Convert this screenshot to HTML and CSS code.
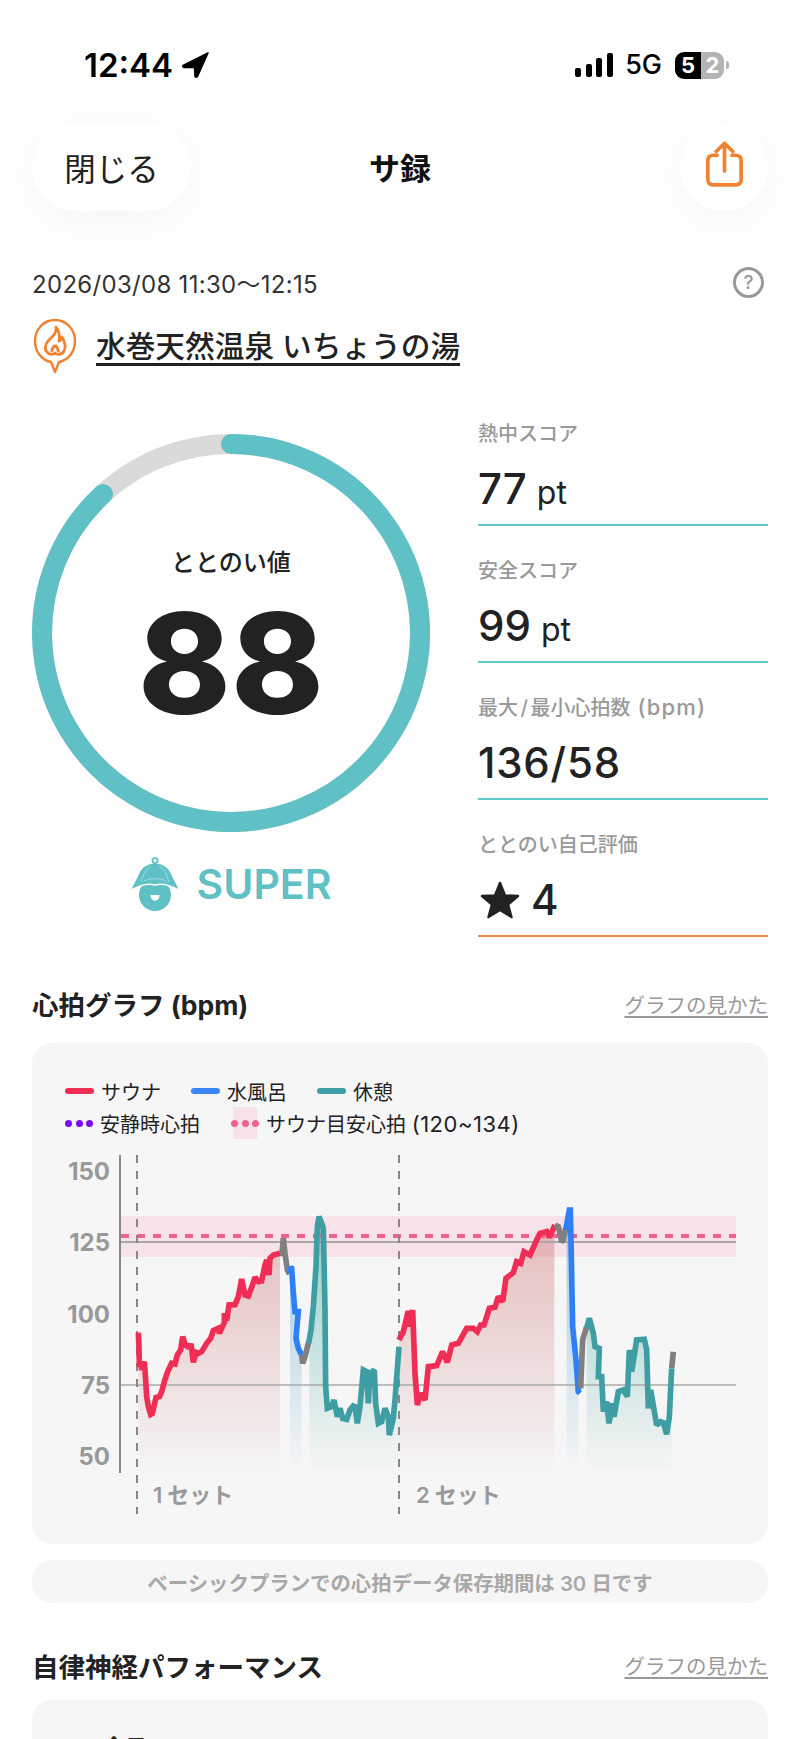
FILE: index.html
```html
<!DOCTYPE html>
<html lang="ja">
<head>
<meta charset="utf-8">
<title>サ録</title>
<link rel="stylesheet" href="styles.css">
</head>
<body>
<div class="page">
  <div class="status">
    <div class="status-left">
      <span class="time">12:44</span>
      <svg class="loc" viewBox="0 0 27 26"><path d="M26 1 L1 13.5 Q0 15 2 15.5 L12.5 15.5 L13 24.5 Q14 26 15.5 24.5 Z" fill="#000" stroke="#000" stroke-width="1.5" stroke-linejoin="round"/></svg>
    </div>
    <div class="status-right">
      <svg class="signal" viewBox="0 0 38 24"><rect x="0" y="15" width="6" height="9" rx="2"/><rect x="11" y="11" width="6" height="13" rx="2"/><rect x="21" y="5" width="6" height="19" rx="2"/><rect x="32" y="0" width="6" height="24" rx="2"/></svg>
      <span class="net">5G</span>
      <div class="battery"><span class="bat-a">5</span><span class="bat-b">2</span></div>
      <span class="nub"></span>
    </div>
  </div>

  <div class="nav">
    <div class="nav-left"><button class="pill">閉じる</button></div>
    <div class="nav-title">サ録</div>
    <div class="nav-right">
      <button class="round">
        <svg class="share" viewBox="0 0 40 50"><path d="M12 15 H8 Q2 15 2 21 V41 Q2 47 8 47 H32 Q38 47 38 41 V21 Q38 15 32 15 H28" fill="none" stroke="#f08232" stroke-width="4" stroke-linecap="round"/><path d="M20 32 V3 M11 11 L20 2 L29 11" fill="none" stroke="#f08232" stroke-width="4" stroke-linecap="round" stroke-linejoin="round"/></svg>
      </button>
    </div>
  </div>

  <div class="meta">
    <span class="date">2026/03/08 11:30～12:15</span>
    <span class="help">?</span>
  </div>

  <div class="venue">
    <svg class="pin" viewBox="0 0 44 56"><path d="M22 54 L18 44 C8 42 2 33 2 23 C2 11 11 2 22 2 C33 2 42 11 42 23 C42 33 36 42 26 44 Z" fill="none" stroke="#f08232" stroke-width="2.4" stroke-linejoin="round"/><path d="M23 9 C24 15 20 18 16 22 C12 26 11 31 14 34 C16 37 20 37 22 35 C24 37 29 37 31 33 C33 29 32 24 29 19 C28 22 27 23 26 23 C27 18 26 13 23 9 Z M22 27 C20 30 18 31 19 34 M22 27 C24 30 26 31 25 34" fill="none" stroke="#f08232" stroke-width="2.8" stroke-linejoin="round"/></svg>
    <a class="venue-name">水巻天然温泉 いちょうの湯</a>
  </div>

  <div class="scores">
    <div class="score-main">
      <div class="ring">
        <svg class="ring-svg" viewBox="0 0 398 398">
          <circle cx="199" cy="199" r="189" fill="none" stroke="#dadada" stroke-width="20"/>
          <path d="M199 10 A189 189 0 1 1 71 60" fill="none" stroke="#5fc0c6" stroke-width="20" stroke-linecap="round"/>
        </svg>
        <div class="ring-body">
          <div class="ring-label">ととのい値</div>
          <div class="ring-value">88</div>
        </div>
      </div>
      <div class="rank">
        <svg class="rank-icon" viewBox="0 0 48 54">
          <circle cx="24" cy="3.5" r="2.6" fill="none" stroke="#5fc0c6" stroke-width="1.8"/>
          <circle cx="24" cy="38" r="16" fill="#5fc0c6"/>
          <path d="M.5 33 C2 28 6 22 8 17 C11 10 17 6.5 24 6.5 C31 6.5 37 10 40 17 C42 22 46 28 47.5 33 C38 28 32 26 24 28 C16 26 10 28 .5 33 Z" fill="#5fc0c6"/>
          <path d="M.5 33 C10 28 16 26 24 28 C32 26 38 28 47.5 33" fill="none" stroke="#fff" stroke-width="1.5"/>
          <path d="M10 25 C12 18 15 12 20 9 M38 25 C36 18 33 12 28 9 M13 24 C18 21 30 21 35 24" fill="none" stroke="#a5dde0" stroke-width=".9"/>
          <path d="M19.5 38 H28.5 C28.5 45.5 19.5 45.5 19.5 38 Z" fill="#fff"/>
        </svg>
        <span class="rank-text">SUPER</span>
      </div>
    </div>
    <div class="score-list">
      <div class="stat">
        <div class="stat-label">熱中スコア</div>
        <div class="stat-value">77<span class="unit">pt</span></div>
      </div>
      <div class="stat">
        <div class="stat-label">安全スコア</div>
        <div class="stat-value">99<span class="unit">pt</span></div>
      </div>
      <div class="stat">
        <div class="stat-label">最大<span class="slash">/</span>最小心拍数<span class="bpm">(bpm)</span></div>
        <div class="stat-value stat-value-wide">136/58</div>
      </div>
      <div class="stat stat-self">
        <div class="stat-label">ととのい自己評価</div>
        <div class="stat-value">
          <svg class="star" viewBox="0 0 40 38"><path d="M20 2 L25 14.5 L38 15 L28 23.5 L31.5 36 L20 29 L8.5 36 L12 23.5 L2 15 L15 14.5 Z" fill="#222" stroke="#222" stroke-width="2.5" stroke-linejoin="round"/></svg>
          <span>4</span>
        </div>
      </div>
    </div>
  </div>

  <div class="head head-first">
    <h2 class="head-title">心拍グラフ (bpm)</h2>
    <a class="head-link">グラフの見かた</a>
  </div>

  <div class="card card-graph">
    <div class="legend">
      <div class="legend-row">
        <span class="item"><i class="sw sw-red"></i>サウナ</span>
        <span class="item"><i class="sw sw-blue"></i>水風呂</span>
        <span class="item"><i class="sw sw-teal"></i>休憩</span>
      </div>
      <div class="legend-row legend-row-2">
        <span class="item"><span class="dots dots-purple"><i></i><i></i><i></i></span>安静時心拍</span>
        <span class="item item-band"><span class="band"><span class="dots dots-pink"><i></i><i></i><i></i></span></span><span>サウナ目安心拍 <span class="range">(120~134)</span></span></span>
      </div>
    </div>
    <svg class="chart" viewBox="32 1150 736 370">
      <defs>
        <linearGradient id="fr" gradientUnits="userSpaceOnUse" x1="0" y1="100" x2="0" y2="830"><stop offset="0" stop-color="#c86464" stop-opacity=".38"/><stop offset="1" stop-color="#c86464" stop-opacity="0"/></linearGradient>
        <linearGradient id="fb" gradientUnits="userSpaceOnUse" x1="0" y1="100" x2="0" y2="820"><stop offset="0" stop-color="#64aad2" stop-opacity=".55"/><stop offset="1" stop-color="#64aad2" stop-opacity="0"/></linearGradient>
        <linearGradient id="ft" gradientUnits="userSpaceOnUse" x1="0" y1="100" x2="0" y2="820"><stop offset="0" stop-color="#46aaa0" stop-opacity=".5"/><stop offset="1" stop-color="#46aaa0" stop-opacity="0"/></linearGradient>
      </defs>

      <rect class="zone" x="121" y="1216" width="615" height="41"/>

      <g class="fills1" transform="translate(30 1200) scale(.33333)">
        <polygon fill="url(#fr)" points="325,398 327,440 328,500 333,490 335,510 343,485 347,540 350,590 355,620 362,643 367,640 378,592 388,590 395,575 403,545 413,515 425,490 435,492 442,465 452,450 458,410 466,435 473,440 484,438 490,487 498,457 505,460 515,455 530,430 542,415 550,392 565,385 568,400 583,368 583,340 590,362 597,315 615,314 625,290 635,237 645,285 655,288 665,262 675,232 685,245 695,243 705,195 710,180 717,225 720,175 730,165 750,160 750,830 325,830"/>
        <polygon fill="url(#fb)" points="780,205 790,280 795,335 805,335 798,415 805,445 815,470 815,810 780,810"/>
        <polygon fill="url(#ft)" points="838,425 843,390 850,320 858,200 862,80 867,50 875,70 880,85 885,330 887,560 892,625 905,620 912,600 922,650 930,625 938,655 950,658 960,630 970,618 975,620 982,670 990,620 1000,510 1010,515 1015,610 1020,520 1033,510 1037,610 1045,670 1055,665 1065,625 1075,650 1078,705 1090,655 1095,600 1105,440 1105,810 838,810"/>
      </g>
      <g class="fills2" transform="translate(390 1200) scale(.33333)">
        <polygon fill="url(#fr)" points="27,420 40,395 53,340 60,340 60,380 68,330 75,520 82,615 92,580 105,600 115,500 140,497 158,455 172,487 185,435 205,430 230,385 250,385 262,395 272,375 282,375 298,325 315,322 325,290 338,305 348,235 370,218 380,185 392,190 402,155 420,165 440,120 450,100 470,95 478,112 493,75 493,830 27,830"/>
        <polygon fill="url(#fb)" points="530,100 538,30 541,30 543,120 548,380 558,480 565,575 565,810 530,810"/>
        <polygon fill="url(#ft)" points="590,385 598,355 610,400 615,440 628,445 625,530 635,530 640,635 650,605 657,670 668,610 672,650 685,575 700,570 712,590 718,450 725,515 740,420 763,418 770,450 775,625 782,570 800,675 812,665 820,668 830,703 838,650 845,505 845,810 590,810"/>
      </g>

      <line class="grid" x1="121" y1="1242" x2="736" y2="1242"/>
      <line class="grid grid-thin" x1="121" y1="1385" x2="736" y2="1385"/>
      <line class="target" x1="121" y1="1236" x2="736" y2="1236"/>
      <line class="axis" x1="120" y1="1155" x2="120" y2="1473"/>
      <line class="set-line" x1="137" y1="1155" x2="137" y2="1514"/>
      <line class="set-line" x1="399" y1="1155" x2="399" y2="1514"/>

      <text class="tick" x="110" y="1180">150</text>
      <text class="tick" x="110" y="1251">125</text>
      <text class="tick" x="110" y="1323">100</text>
      <text class="tick" x="110" y="1394">75</text>
      <text class="tick" x="110" y="1465">50</text>
      <text class="set-name" x="153" y="1503">1<tspan dx="5">セット</tspan></text>
      <text class="set-name" x="416" y="1503">2<tspan dx="5">セット</tspan></text>

      <g class="curves" transform="translate(30 1200) scale(.33333)">
        <polyline class="c-red" points="325,398 327,440 328,500 333,490 335,510 343,485 347,540 350,590 355,620 362,643 367,640 378,592 388,590 395,575 403,545 413,515 425,490 435,492 442,465 452,450 458,410 466,435 473,440 478,437 484,438 490,487 498,457 505,460 515,455 530,430 542,415 550,392 565,385 568,400 583,368 583,340 590,362 597,315 615,314 625,290 635,237 645,285 655,288 665,262 675,232 685,245 695,243 705,195 710,180 717,225 720,175 730,165 750,160"/>
        <polyline class="c-gray" points="750,160 756,160 760,115 765,160 772,210 778,222"/>
        <polyline class="c-blue" points="778,222 782,202 785,205 790,280 795,335 805,335 798,415 805,445 815,465"/>
        <polyline class="c-gray" points="815,465 818,490 825,470 836,425"/>
        <polyline class="c-teal" points="836,430 843,390 850,320 858,200 862,80 867,50 875,70 880,85 885,330 887,560 892,625 905,620 912,600 922,650 930,625 938,655 950,658 960,630 970,618 975,620 982,670 990,620 1000,510 1010,515 1015,610 1020,520 1033,510 1037,610 1045,670 1055,665 1065,625 1075,650 1078,705 1090,655 1095,600 1107,440"/>
      </g>
      <g class="curves" transform="translate(390 1200) scale(.33333)">
        <polyline class="c-red" points="27,420 40,395 53,340 60,340 60,380 68,330 75,520 82,615 92,580 105,600 115,500 140,497 158,455 172,487 185,435 205,430 230,385 250,385 262,395 272,375 282,375 298,325 315,322 325,290 338,305 348,235 370,218 380,185 392,190 402,155 420,165 440,120 450,100 470,95 478,112 495,75"/>
        <polyline class="c-gray" points="495,75 505,80 515,125 520,120 527,85"/>
        <polyline class="c-blue" points="527,90 538,30 541,30 543,120 548,380 558,480 565,575 570,580"/>
        <polyline class="c-gray" points="572,565 578,420 590,380"/>
        <polyline class="c-teal" points="590,385 598,355 610,400 615,440 628,445 625,530 635,530 640,635 650,605 657,670 668,610 672,650 685,575 700,570 712,590 718,450 725,515 740,420 763,418 770,450 775,625 782,570 800,675 812,665 820,668 830,703 838,650 845,505"/>
        <polyline class="c-gray" points="845,505 850,455"/>
      </g>
    </svg>
  </div>

  <div class="notice">ベーシックプランでの心拍データ保存期間は 30 日です</div>

  <div class="head head-second">
    <h2 class="head-title">自律神経パフォーマンス</h2>
    <a class="head-link">グラフの見かた</a>
  </div>

  <div class="card card-next">
    <div class="next-label">全日</div>
  </div>
</div>
</body>
</html>
```

FILE: styles.css
```css
* { box-sizing: border-box; }
html, body { margin: 0; padding: 0; background: #fff; }
body { width: 800px; height: 1739px; overflow: hidden; font-family: Inter, "Noto Sans CJK JP", sans-serif; color: #222; }
.page { width: 800px; }

.status { display: flex; justify-content: space-between; align-items: center; height: 26px; margin-top: 52px; padding: 0 71px 0 84px; color: #000; }
.status-left, .status-right { display: flex; align-items: center; }
.time { font-size: 33px; font-weight: 600; line-height: 26px; }
.loc { width: 27px; height: 26px; margin-left: 9px; }
.signal { width: 38px; height: 24px; fill: #000; }
.net { font-size: 27px; font-weight: 500; line-height: 26px; margin-left: 12px; }
.battery { display: flex; width: 49px; height: 27px; margin-left: 13px; border-radius: 9px; overflow: hidden; font-size: 22px; font-weight: 700; line-height: 27px; color: #fff; text-align: center; }
.bat-a { width: 26px; background: #000; }
.bat-b { width: 23px; background: #b4b4b4; }
.nub { width: 3px; height: 8px; margin-left: 2px; background: #b4b4b4; border-radius: 0 3px 3px 0; }

.nav { display: grid; grid-template-columns: 1fr auto 1fr; align-items: center; height: 89px; margin-top: 44px; padding: 0 32px; }
.nav-right { display: flex; justify-content: flex-end; }
.pill, .round { display: flex; align-items: center; justify-content: center; height: 89px; padding: 0; border: 0; background: #fff; border-radius: 44px; box-shadow: 0 10px 50px rgba(0, 0, 0, .045); font-family: inherit; color: #222; }
.pill { width: 159px; font-size: 31.5px; }
.round { width: 88px; }
.share { width: 37px; height: 47px; margin-top: -4px; }
.nav-title { font-size: 31px; font-weight: 700; color: #111; }

.meta { display: flex; justify-content: space-between; align-items: center; height: 31px; margin-top: 56px; padding: 0 36px 0 32px; }
.date { font-size: 24px; letter-spacing: .3px; color: #333; }
.help { display: flex; align-items: center; justify-content: center; width: 31px; height: 31px; border: 3px solid #999; border-radius: 50%; color: #999; font-size: 19px; font-weight: 500; }

.venue { display: flex; align-items: center; height: 54px; margin-top: 21px; padding-left: 33px; }
.pin { width: 44px; height: 56px; flex: none; }
.venue-name { margin-left: 19px; margin-top: 3px; font-size: 29.7px; font-weight: 500; line-height: 33px; border-bottom: 3px solid #222; color: #222; }

.scores { display: grid; grid-template-columns: 398px 290px; column-gap: 48px; margin-top: 46px; padding-left: 32px; }
.score-main { padding-top: 15px; }
.ring { position: relative; width: 398px; height: 398px; }
.ring-svg { display: block; width: 398px; height: 398px; }
.ring-body { position: absolute; inset: 0; display: flex; flex-direction: column; align-items: center; }
.ring-label { margin-top: 112px; font-size: 24px; font-weight: 500; line-height: 34px; }
.ring-value { margin-top: 8px; font-size: 140px; font-weight: 800; line-height: 150px; }
.rank { display: flex; align-items: center; justify-content: center; gap: 18px; height: 54px; margin-top: 25px; }
.rank-icon { width: 48px; height: 54px; }
.rank-text { font-size: 41px; font-weight: 600; color: #5fc0c6; line-height: 54px; }

.score-list { display: flex; flex-direction: column; gap: 29.6px; }
.stat { padding-bottom: 10px; border-bottom: 2px solid #5ec8c8; }
.stat-self { border-bottom-color: #ef8b4a; }
.stat-label { font-size: 20px; font-weight: 500; line-height: 30px; color: #999; }
.slash { margin: 0 2.5px; }
.bpm { margin-left: 7px; font-size: 22px; letter-spacing: 1.2px; }
.stat-value { display: flex; align-items: baseline; height: 50px; margin-top: 15px; font-size: 42px; font-weight: 500; line-height: 50px; }
.stat-value-wide { letter-spacing: .8px; }
.unit { margin-left: 10px; font-size: 32px; font-weight: 400; }
.star { align-self: center; width: 40px; height: 38px; margin: 0 11px 0 2px; }

.head { display: flex; justify-content: space-between; align-items: center; height: 40px; padding: 0 32px; }
.head-first { margin-top: 47px; }
.head-second { margin-top: 42px; }
.head-title { margin: 0; font-size: 26.5px; font-weight: 700; color: #222; }
.head-link { font-size: 20.5px; color: #999; text-decoration: underline; text-underline-offset: 3px; }

.card { width: 736px; margin: 0 32px; background: #f6f6f6; border-radius: 20px; }
.card-graph { margin-top: 19.4px; padding: 32px 0 24px; }
.legend-row { display: flex; align-items: center; gap: 30px; height: 32px; padding-left: 33px; font-size: 20px; color: #222; }
.legend-row-2 { gap: 33px; }
.item { display: flex; align-items: center; gap: 7px; }
.item-band { gap: 9px; }
.range { font-size: 22px; letter-spacing: .5px; }
.sw { display: block; width: 29px; height: 6px; border-radius: 3px; }
.sw-red { background: #f02d55; }
.sw-blue { background: #3b86f5; }
.sw-teal { background: #3f9ea3; }
.dots { display: flex; flex: none; justify-content: space-between; width: 28px; }
.dots i { display: block; width: 7px; height: 7px; border-radius: 50%; }
.dots-purple i { background: #7d0bf5; }
.dots-pink i { background: #ee6292; }
.band { display: flex; align-items: center; justify-content: center; width: 24px; height: 32px; background: #f6e2e8; }
.chart { display: block; width: 736px; height: 370px; margin-top: 11px; }

.zone { fill: #f6e2e8; }
.grid { stroke: #a8a8a8; stroke-width: 2; }
.grid-thin { stroke-width: 1.6; }
.target { stroke: #ee6292; stroke-width: 4; stroke-dasharray: 8 8; }
.axis { stroke: #888; stroke-width: 2; }
.set-line { stroke: #888; stroke-width: 2; stroke-dasharray: 8 8; }
.tick { font-family: Inter, sans-serif; font-size: 24px; font-weight: 700; fill: #999; text-anchor: end; }
.set-name { font-family: Inter, "Noto Sans CJK JP", sans-serif; font-size: 22px; font-weight: 600; fill: #999; }
.curves polyline { fill: none; stroke-width: 17; stroke-linejoin: miter; stroke-miterlimit: 2; }
.c-red { stroke: #f02d55; }
.c-blue { stroke: #2f80f5; }
.c-teal { stroke: #3f9ea3; }
.c-gray { stroke: #808080; }

.notice { display: flex; align-items: center; justify-content: center; height: 43px; margin: 16px 32px 0; background: #f6f6f6; border-radius: 20px; font-size: 20.4px; font-weight: 600; color: #a8a8a8; }

.card-next { height: 100px; margin-top: 15px; padding-top: 32px; }
.next-label { padding-left: 71px; font-size: 22px; font-weight: 500; line-height: 30px; color: #222; }
```
